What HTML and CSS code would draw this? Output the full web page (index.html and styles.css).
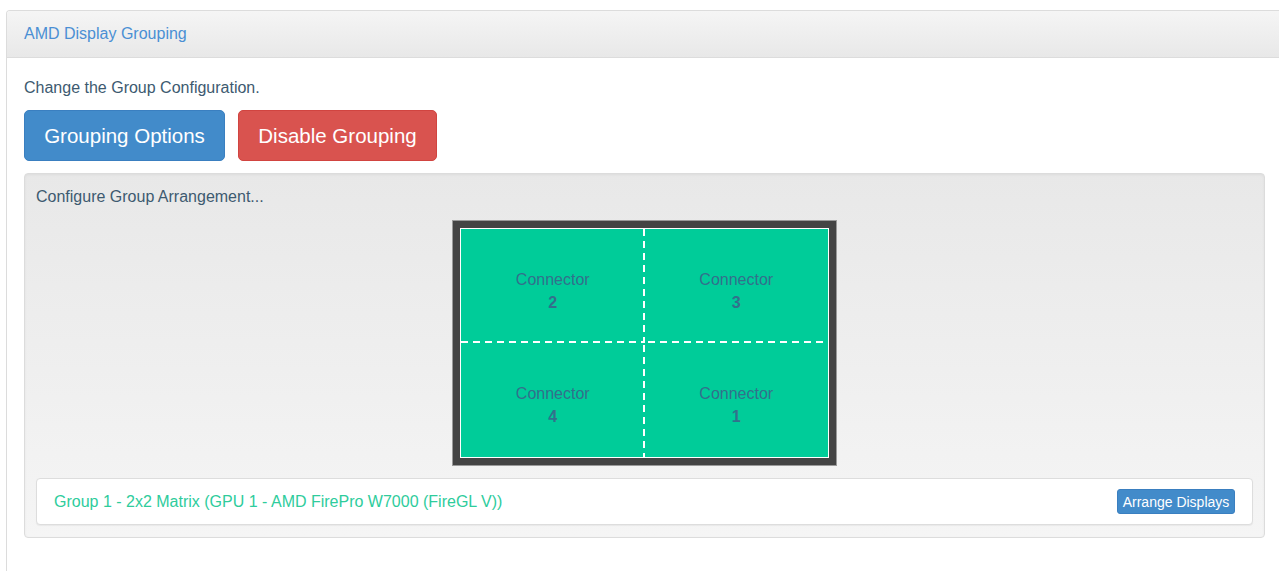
FILE: index.html
```html
<!DOCTYPE html>
<html lang="en">
<head>
<meta charset="utf-8">
<title>AMD Display Grouping</title>
<link rel="stylesheet" href="styles.css">
</head>
<body>
<div class="page">
  <section class="panel">
    <header class="panel-heading">AMD Display Grouping</header>
    <div class="panel-body">
      <p class="intro">Change the Group Configuration.</p>
      <div class="actions">
        <button class="btn btn-lg btn-primary" type="button">Grouping Options</button>
        <button class="btn btn-lg btn-danger" type="button">Disable Grouping</button>
      </div>
      <div class="well">
        <p class="well-title">Configure Group Arrangement...</p>
        <div class="arrangement">
          <div class="frame">
            <div class="matrix">
              <div class="cell cell-tl"><span>Connector</span><b>2</b></div>
              <div class="cell cell-tr"><span>Connector</span><b>3</b></div>
              <div class="cell cell-bl"><span>Connector</span><b>4</b></div>
              <div class="cell cell-br"><span>Connector</span><b>1</b></div>
            </div>
          </div>
        </div>
        <div class="group-row">
          <span class="group-name">Group 1 - 2x2 Matrix (GPU 1 - AMD FirePro W7000 (FireGL V))</span>
          <button class="btn btn-xs btn-primary" type="button">Arrange Displays</button>
        </div>
      </div>
    </div>
  </section>
</div>
</body>
</html>
```

FILE: styles.css
```css
* {
  box-sizing: border-box;
}

html, body {
  margin: 0;
  padding: 0;
  background: #ffffff;
  overflow: hidden;
}

body {
  font-family: "Liberation Sans", Arial, sans-serif;
  color: #3d5a70;
}

.page {
  height: 100vh;
  padding: 10px 0 0 6px;
}

.panel {
  width: 1300px;
  height: 100%;
  border: 1px solid #dcdcdc;
  border-bottom: none;
  border-radius: 4px 4px 0 0;
  background: #ffffff;
}

.panel-heading {
  height: 47px;
  padding: 0 17px;
  display: flex;
  align-items: center;
  font-size: 16px;
  color: #4a8fd4;
  background: linear-gradient(to bottom, #f5f5f5, #e8e8e8);
  border-bottom: 1px solid #dcdcdc;
  border-radius: 3px 3px 0 0;
}

.panel-body {
  width: 1258px;
  padding: 19px 0 0 17px;
}

.intro {
  margin: 0;
  font-size: 16px;
  line-height: 21px;
  color: #3d5a70;
}

.actions {
  display: flex;
  gap: 13px;
  margin-top: 12px;
}

.btn {
  font-family: "Liberation Sans", Arial, sans-serif;
  color: #ffffff;
  border: 1px solid transparent;
  cursor: pointer;
}

.btn-lg {
  height: 51px;
  padding: 0 10px;
  font-size: 20.5px;
  border-radius: 5px;
}

.btn-primary {
  background: #428bca;
  border-color: #3a7fc0;
}

.btn-danger {
  background: #d9534f;
  border-color: #d14440;
}

.btn-lg.btn-primary {
  width: 201px;
}

.btn-lg.btn-danger {
  width: 199px;
}

.btn-xs {
  width: 118px;
  height: 25px;
  padding: 0;
  font-size: 14px;
  border-radius: 3px;
}

.well {
  margin-top: 12px;
  padding: 12px 11px 12px;
  border: 1px solid #dcdcdc;
  border-radius: 4px;
  background: linear-gradient(to bottom, #e8e8e8, #f5f5f5);
  box-shadow: inset 0 1px 3px rgba(0, 0, 0, 0.05);
}

.well-title {
  margin: 0;
  font-size: 16px;
  line-height: 21px;
  color: #3d5a70;
}

.arrangement {
  display: flex;
  justify-content: center;
  margin-top: 13px;
}

.frame {
  width: 385px;
  height: 246px;
  border: 1px solid #9a9a9a;
  background: #444444;
  padding: 7px;
}

.matrix {
  width: 100%;
  height: 100%;
  border: 1px solid #ffffff;
  background: #00cc99;
  display: grid;
  grid-template-columns: 1fr 1fr;
  grid-template-rows: 1fr 1fr;
}

.cell {
  display: flex;
  flex-direction: column;
  align-items: center;
  justify-content: center;
  padding-top: 10px;
  font-size: 16px;
  line-height: 23px;
  color: #33708c;
  background-repeat: no-repeat;
}

.cell b {
  font-weight: bold;
  font-size: 16px;
}

/* dashed dividers: 7px dash, 5px gap, 2px thick */
.cell-tl {
  background-image:
    repeating-linear-gradient(to bottom, #ffffff 0 7px, transparent 7px 12px),
    repeating-linear-gradient(to right, #ffffff 0 7px, transparent 7px 12px);
  background-size: 2px 100%, 100% 2px;
  background-position: right top, left bottom;
}

.cell-tr {
  background-image: repeating-linear-gradient(to right, transparent 0 3px, #ffffff 3px 10px, transparent 10px 12px);
  background-size: 100% 2px;
  background-position: left bottom;
}

.cell-bl {
  background-image: repeating-linear-gradient(to bottom, transparent 0 2px, #ffffff 2px 9px, transparent 9px 12px);
  background-size: 2px 100%;
  background-position: right top;
}

.group-row {
  margin-top: 12px;
  height: 47px;
  padding: 0 17px;
  display: flex;
  align-items: center;
  justify-content: space-between;
  background: #ffffff;
  border: 1px solid #dddddd;
  border-radius: 4px;
  box-shadow: 0 1px 1px rgba(0, 0, 0, 0.05);
}

.group-name {
  font-size: 16px;
  color: #2ecc9c;
}
```
